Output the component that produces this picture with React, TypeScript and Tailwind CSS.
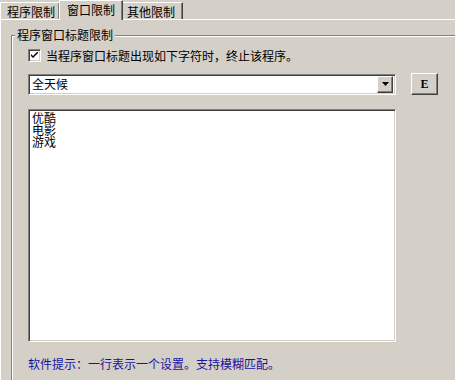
import React from "react";

const sunken =
  "border border-t-[#808080] border-l-[#808080] border-b-white border-r-white shadow-[inset_1px_1px_0_#404040,inset_-1px_-1px_0_#d4d0c8]";
const raised =
  "border border-t-white border-l-white border-r-[#404040] border-b-[#404040] shadow-[inset_-1px_-1px_0_#808080]";

export default function App() {
  return (
    <div className="w-[455px] h-[380px] overflow-hidden bg-[#d4d0c8] text-[12px] leading-[12px] text-black font-['Noto_Sans_CJK_SC','Noto_Sans_CJK_JP',sans-serif]">
      {/* Tabs */}
      <div className="flex items-end h-[19px]">
        <div className="w-[60px] h-[17px] border-t border-l border-white border-r border-r-[#404040] shadow-[inset_-1px_0_0_#808080] pl-[6px] pt-[3px]">
          程序限制
        </div>
        <div className="relative z-10 -ml-px -mb-px w-[64px] h-[20px] bg-[#d4d0c8] border-t border-l border-white border-r border-r-[#404040] shadow-[inset_-1px_0_0_#808080] pl-[7px] pt-[3px]">
          窗口限制
        </div>
        <div className="w-[60px] h-[17px] border-t border-white border-r border-r-[#404040] shadow-[inset_-1px_0_0_#808080] pl-[4px] pt-[3px]">
          其他限制
        </div>
      </div>

      {/* Panel */}
      <div className="border-t border-l border-white h-[400px] pt-[9px] pl-[10px]">
        <fieldset className="w-[480px] h-[420px] border border-[#808080] shadow-[inset_1px_1px_0_#fff]">
          <legend className="ml-[3px] px-[2px] bg-[#d4d0c8] leading-[12px]">
            程序窗口标题限制
          </legend>
          <div className="pl-[16px] pt-[8px]">
            {/* Checkbox row */}
            <div className="flex items-center gap-[5px] h-[13px]">
              <div className={`w-[13px] h-[13px] bg-white ${sunken} flex items-center justify-center`}>
                <svg width="7" height="7" viewBox="0 0 7 7">
                  <path d="M0 2 L0 4 L2 6 L7 1 L7 -1 L2 4 Z" fill="#000" />
                </svg>
              </div>
              <span>当程序窗口标题出现如下字符时，终止该程序。</span>
            </div>

            {/* Combo row */}
            <div className="flex items-center mt-[11px] gap-[15px]">
              <div className={`w-[368px] h-[21px] bg-white ${sunken} flex items-center justify-between pl-[3px] pr-[2px]`}>
                <span>全天候</span>
                <div className={`w-[16px] h-[17px] bg-[#d4d0c8] ${raised} flex items-center justify-center`}>
                  <svg width="7" height="4" viewBox="0 0 7 4">
                    <path d="M0 0 H7 L3.5 4 Z" fill="#000" />
                  </svg>
                </div>
              </div>
              <button className={`w-[27px] h-[22px] bg-[#d4d0c8] ${raised} flex items-center justify-center font-['Liberation_Serif',serif] text-[12px] font-bold`}>
                E
              </button>
            </div>

            {/* List */}
            <div className={`mt-[14px] w-[368px] h-[233px] bg-white ${sunken} pl-[3px] pt-[2px]`}>
              <div className="h-[12px]">优酷</div>
              <div className="h-[12px]">电影</div>
              <div className="h-[12px]">游戏</div>
            </div>

            {/* Hint */}
            <div className="mt-[16px] text-[#1414a0]">软件提示：一行表示一个设置。支持模糊匹配。</div>
          </div>
        </fieldset>
      </div>
    </div>
  );
}
